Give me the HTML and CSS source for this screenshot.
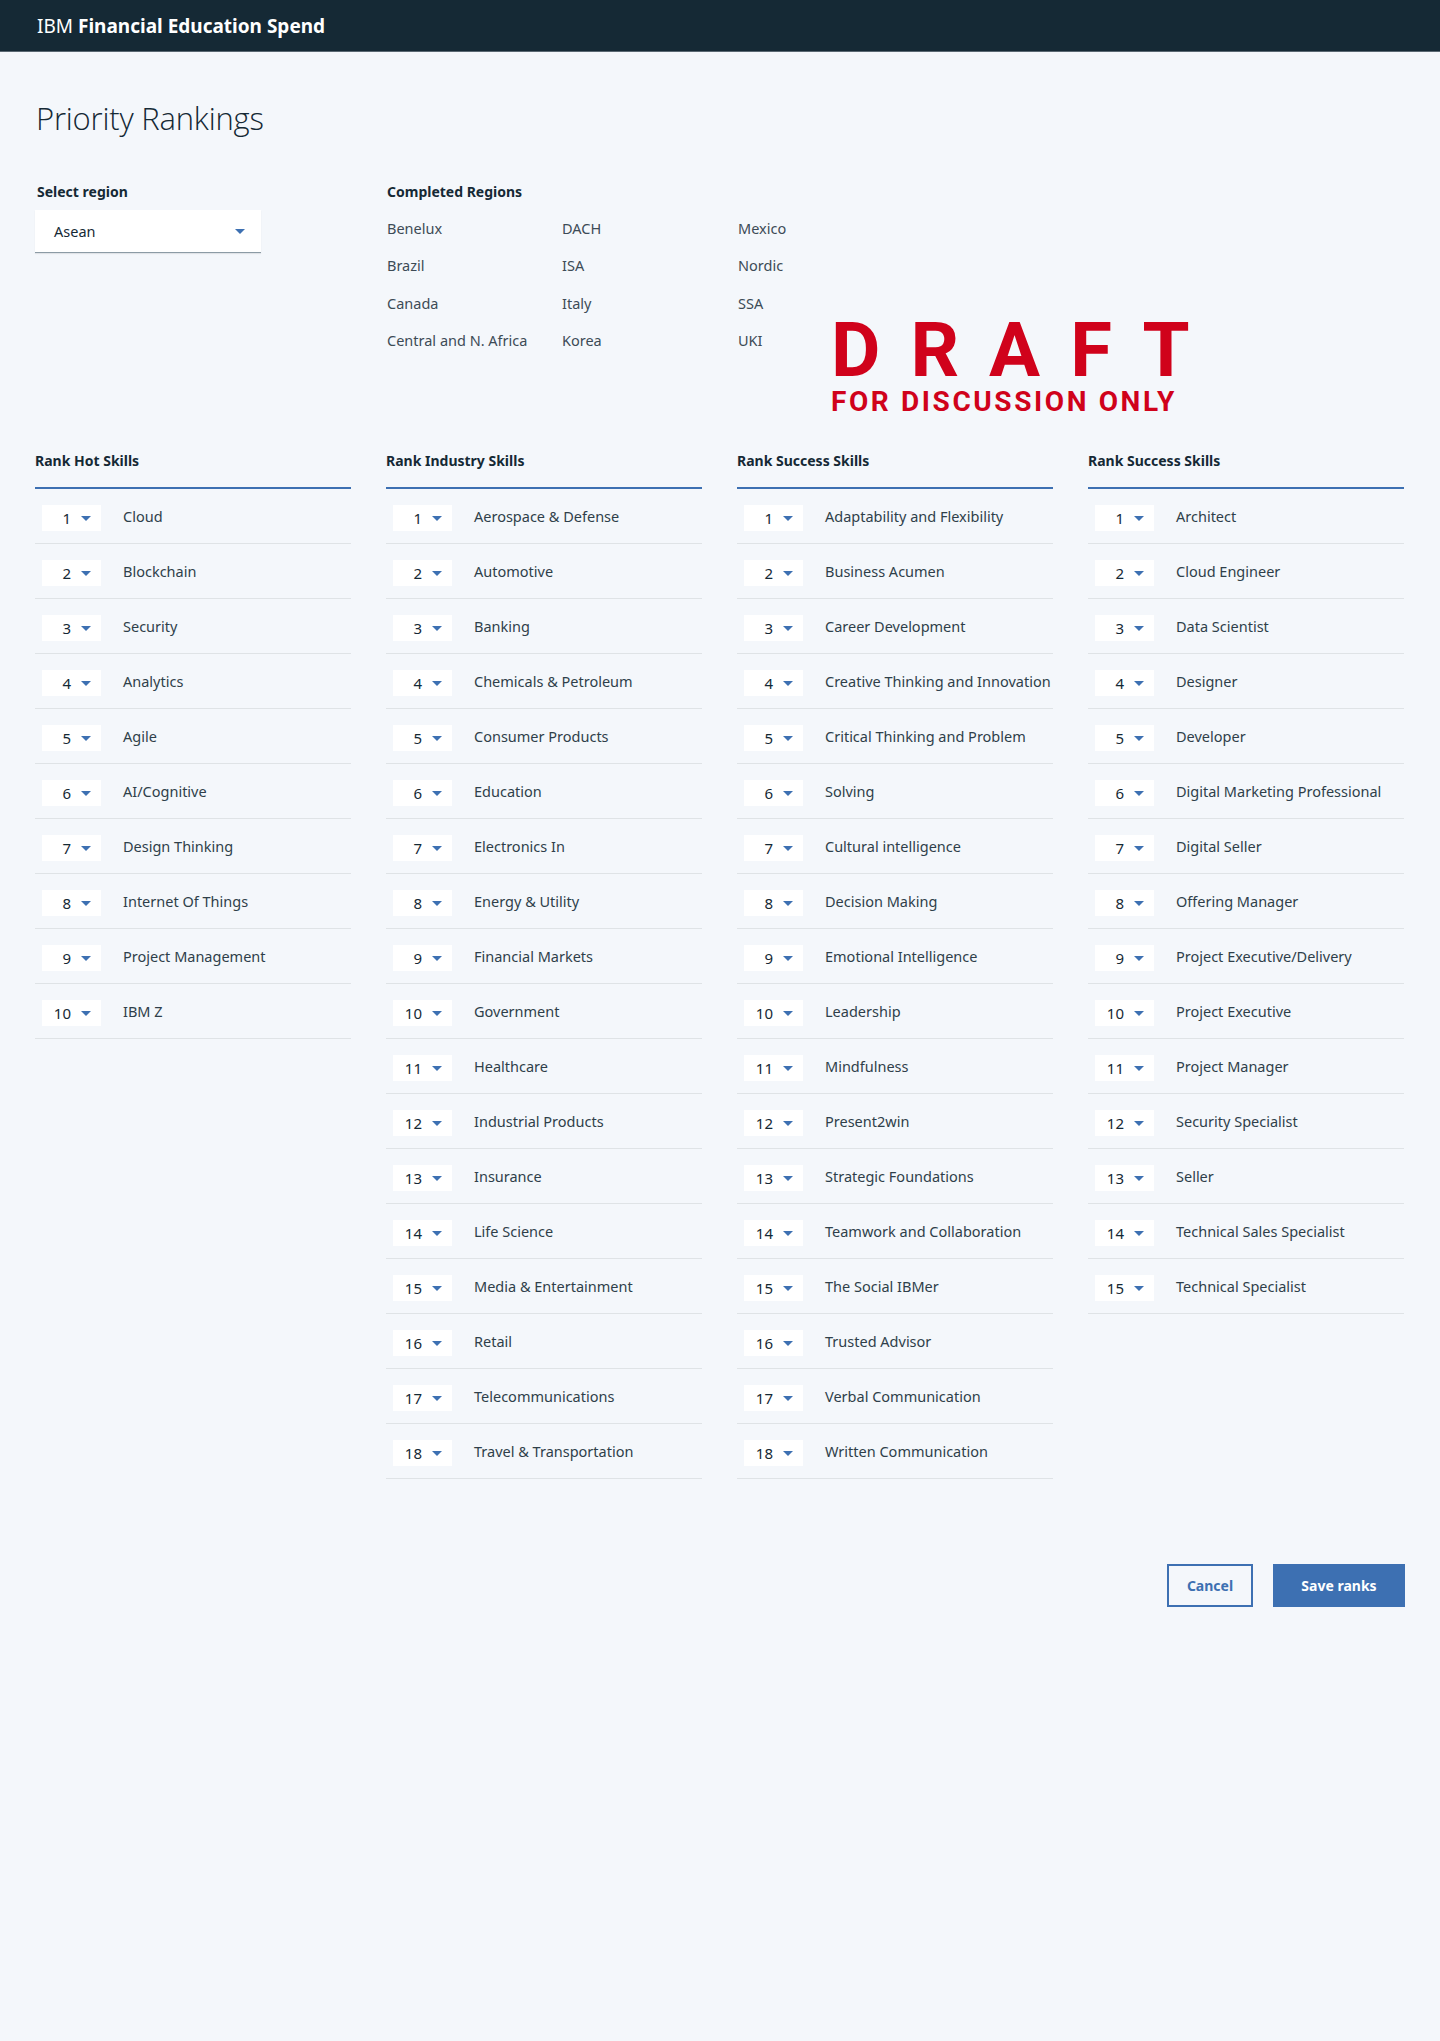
FILE: index.html
```html
<!DOCTYPE html>
<html lang="en">
<head>
<meta charset="utf-8">
<title>IBM Financial Education Spend</title>
<link rel="stylesheet" href="styles.css">
</head>
<body>
<header class="masthead">
  <span class="brand">IBM <strong>Financial Education Spend</strong></span>
</header>
<main class="page">
  <h1 class="page-title">Priority Rankings</h1>

  <section class="overview">
    <div class="region-select">
      <label class="field-label">Select region</label>
      <div class="select-box"><span>Asean</span><i class="caret"></i></div>
    </div>
    <div class="completed">
      <div class="field-label">Completed Regions</div>
      <ul class="region-grid">
        <li>Benelux</li><li>DACH</li><li>Mexico</li>
        <li>Brazil</li><li>ISA</li><li>Nordic</li>
        <li>Canada</li><li>Italy</li><li>SSA</li>
        <li>Central and N. Africa</li><li>Korea</li><li>UKI</li>
      </ul>
    </div>
    <div class="draft-stamp">
      <div class="draft-word">DRAFT</div>
      <div class="draft-sub">FOR DISCUSSION ONLY</div>
    </div>
  </section>

  <section class="rank-grid">
    <div class="rank-col">
      <h2 class="col-title">Rank Hot Skills</h2>
      <ul class="rank-list">
        <li class="row"><span class="rank"><b>1</b><i class="caret"></i></span><span class="skill">Cloud</span></li>
        <li class="row"><span class="rank"><b>2</b><i class="caret"></i></span><span class="skill">Blockchain</span></li>
        <li class="row"><span class="rank"><b>3</b><i class="caret"></i></span><span class="skill">Security</span></li>
        <li class="row"><span class="rank"><b>4</b><i class="caret"></i></span><span class="skill">Analytics</span></li>
        <li class="row"><span class="rank"><b>5</b><i class="caret"></i></span><span class="skill">Agile</span></li>
        <li class="row"><span class="rank"><b>6</b><i class="caret"></i></span><span class="skill">AI/Cognitive</span></li>
        <li class="row"><span class="rank"><b>7</b><i class="caret"></i></span><span class="skill">Design Thinking</span></li>
        <li class="row"><span class="rank"><b>8</b><i class="caret"></i></span><span class="skill">Internet Of Things</span></li>
        <li class="row"><span class="rank"><b>9</b><i class="caret"></i></span><span class="skill">Project Management</span></li>
        <li class="row"><span class="rank"><b>10</b><i class="caret"></i></span><span class="skill">IBM Z</span></li>
      </ul>
    </div>
    <div class="rank-col">
      <h2 class="col-title">Rank Industry Skills</h2>
      <ul class="rank-list">
        <li class="row"><span class="rank"><b>1</b><i class="caret"></i></span><span class="skill">Aerospace &amp; Defense</span></li>
        <li class="row"><span class="rank"><b>2</b><i class="caret"></i></span><span class="skill">Automotive</span></li>
        <li class="row"><span class="rank"><b>3</b><i class="caret"></i></span><span class="skill">Banking</span></li>
        <li class="row"><span class="rank"><b>4</b><i class="caret"></i></span><span class="skill">Chemicals &amp; Petroleum</span></li>
        <li class="row"><span class="rank"><b>5</b><i class="caret"></i></span><span class="skill">Consumer Products</span></li>
        <li class="row"><span class="rank"><b>6</b><i class="caret"></i></span><span class="skill">Education</span></li>
        <li class="row"><span class="rank"><b>7</b><i class="caret"></i></span><span class="skill">Electronics In</span></li>
        <li class="row"><span class="rank"><b>8</b><i class="caret"></i></span><span class="skill">Energy &amp; Utility</span></li>
        <li class="row"><span class="rank"><b>9</b><i class="caret"></i></span><span class="skill">Financial Markets</span></li>
        <li class="row"><span class="rank"><b>10</b><i class="caret"></i></span><span class="skill">Government</span></li>
        <li class="row"><span class="rank"><b>11</b><i class="caret"></i></span><span class="skill">Healthcare</span></li>
        <li class="row"><span class="rank"><b>12</b><i class="caret"></i></span><span class="skill">Industrial Products</span></li>
        <li class="row"><span class="rank"><b>13</b><i class="caret"></i></span><span class="skill">Insurance</span></li>
        <li class="row"><span class="rank"><b>14</b><i class="caret"></i></span><span class="skill">Life Science</span></li>
        <li class="row"><span class="rank"><b>15</b><i class="caret"></i></span><span class="skill">Media &amp; Entertainment</span></li>
        <li class="row"><span class="rank"><b>16</b><i class="caret"></i></span><span class="skill">Retail</span></li>
        <li class="row"><span class="rank"><b>17</b><i class="caret"></i></span><span class="skill">Telecommunications</span></li>
        <li class="row"><span class="rank"><b>18</b><i class="caret"></i></span><span class="skill">Travel &amp; Transportation</span></li>
      </ul>
    </div>
    <div class="rank-col">
      <h2 class="col-title">Rank Success Skills</h2>
      <ul class="rank-list">
        <li class="row"><span class="rank"><b>1</b><i class="caret"></i></span><span class="skill">Adaptability and Flexibility</span></li>
        <li class="row"><span class="rank"><b>2</b><i class="caret"></i></span><span class="skill">Business Acumen</span></li>
        <li class="row"><span class="rank"><b>3</b><i class="caret"></i></span><span class="skill">Career Development</span></li>
        <li class="row"><span class="rank"><b>4</b><i class="caret"></i></span><span class="skill">Creative Thinking and Innovation</span></li>
        <li class="row"><span class="rank"><b>5</b><i class="caret"></i></span><span class="skill">Critical Thinking and Problem</span></li>
        <li class="row"><span class="rank"><b>6</b><i class="caret"></i></span><span class="skill">Solving</span></li>
        <li class="row"><span class="rank"><b>7</b><i class="caret"></i></span><span class="skill">Cultural intelligence</span></li>
        <li class="row"><span class="rank"><b>8</b><i class="caret"></i></span><span class="skill">Decision Making</span></li>
        <li class="row"><span class="rank"><b>9</b><i class="caret"></i></span><span class="skill">Emotional Intelligence</span></li>
        <li class="row"><span class="rank"><b>10</b><i class="caret"></i></span><span class="skill">Leadership</span></li>
        <li class="row"><span class="rank"><b>11</b><i class="caret"></i></span><span class="skill">Mindfulness</span></li>
        <li class="row"><span class="rank"><b>12</b><i class="caret"></i></span><span class="skill">Present2win</span></li>
        <li class="row"><span class="rank"><b>13</b><i class="caret"></i></span><span class="skill">Strategic Foundations</span></li>
        <li class="row"><span class="rank"><b>14</b><i class="caret"></i></span><span class="skill">Teamwork and Collaboration</span></li>
        <li class="row"><span class="rank"><b>15</b><i class="caret"></i></span><span class="skill">The Social IBMer</span></li>
        <li class="row"><span class="rank"><b>16</b><i class="caret"></i></span><span class="skill">Trusted Advisor</span></li>
        <li class="row"><span class="rank"><b>17</b><i class="caret"></i></span><span class="skill">Verbal Communication</span></li>
        <li class="row"><span class="rank"><b>18</b><i class="caret"></i></span><span class="skill">Written Communication</span></li>
      </ul>
    </div>
    <div class="rank-col">
      <h2 class="col-title">Rank Success Skills</h2>
      <ul class="rank-list">
        <li class="row"><span class="rank"><b>1</b><i class="caret"></i></span><span class="skill">Architect</span></li>
        <li class="row"><span class="rank"><b>2</b><i class="caret"></i></span><span class="skill">Cloud Engineer</span></li>
        <li class="row"><span class="rank"><b>3</b><i class="caret"></i></span><span class="skill">Data Scientist</span></li>
        <li class="row"><span class="rank"><b>4</b><i class="caret"></i></span><span class="skill">Designer</span></li>
        <li class="row"><span class="rank"><b>5</b><i class="caret"></i></span><span class="skill">Developer</span></li>
        <li class="row"><span class="rank"><b>6</b><i class="caret"></i></span><span class="skill">Digital Marketing Professional</span></li>
        <li class="row"><span class="rank"><b>7</b><i class="caret"></i></span><span class="skill">Digital Seller</span></li>
        <li class="row"><span class="rank"><b>8</b><i class="caret"></i></span><span class="skill">Offering Manager</span></li>
        <li class="row"><span class="rank"><b>9</b><i class="caret"></i></span><span class="skill">Project Executive/Delivery</span></li>
        <li class="row"><span class="rank"><b>10</b><i class="caret"></i></span><span class="skill">Project Executive</span></li>
        <li class="row"><span class="rank"><b>11</b><i class="caret"></i></span><span class="skill">Project Manager</span></li>
        <li class="row"><span class="rank"><b>12</b><i class="caret"></i></span><span class="skill">Security Specialist</span></li>
        <li class="row"><span class="rank"><b>13</b><i class="caret"></i></span><span class="skill">Seller</span></li>
        <li class="row"><span class="rank"><b>14</b><i class="caret"></i></span><span class="skill">Technical Sales Specialist</span></li>
        <li class="row"><span class="rank"><b>15</b><i class="caret"></i></span><span class="skill">Technical Specialist</span></li>
      </ul>
    </div>
  </section>

  <div class="actions">
    <button class="btn btn-secondary" type="button">Cancel</button>
    <button class="btn btn-primary" type="button">Save ranks</button>
  </div>
</main>
</body>
</html>
```

FILE: styles.css
```css
html {
  background: #f4f7fb;
}
body {
  margin: 0;
  min-height: 2041px;
  background: #f4f7fb;
  color: #152935;
  font-family: "Noto Sans", "Open Sans", "Liberation Sans", sans-serif;
  font-size: 14px;
}
ul {
  list-style: none;
  margin: 0;
  padding: 0;
}

/* header */
.masthead {
  height: 51px;
  background: #152935;
  border-bottom: 1px solid #5a6872;
  display: flex;
  align-items: center;
  padding-left: 37px;
  box-sizing: content-box;
}
.brand {
  color: #ffffff;
  font-size: 19px;
  line-height: 22px;
  font-weight: 400;
}
.brand strong {
  font-weight: 700;
}

/* page */
.page {
  padding: 0 35px;
}
.page-title {
  margin: 48px 0 0 1px;
  font-family: "Open Sans", "Noto Sans", sans-serif;
  font-weight: 300;
  font-size: 31px;
  line-height: 37px;
  color: #152935;
  letter-spacing: -0.2px;
}

/* overview */
.overview {
  position: relative;
  display: flex;
  margin-top: 46px;
  height: 180px;
}
.region-select {
  width: 352px;
  flex: none;
}
.field-label {
  display: block;
  font-size: 14px;
  line-height: 18px;
  font-weight: 700;
  color: #152935;
}
.region-select .field-label {
  padding-left: 2px;
}
.select-box {
  margin-top: 9px;
  width: 226px;
  height: 43px;
  background: #ffffff;
  border-bottom: 1px solid #8c9ba5;
  box-shadow: 0 1px 1px rgba(0, 0, 0, 0.08);
  display: flex;
  align-items: center;
  justify-content: space-between;
  padding: 0 16px 0 19px;
  box-sizing: border-box;
  font-size: 14.5px;
  color: #152935;
}
.caret {
  display: inline-block;
  width: 0;
  height: 0;
  border-left: 5px solid transparent;
  border-right: 5px solid transparent;
  border-top: 5px solid #3d70b2;
}
.completed {
  flex: none;
}
.region-grid {
  margin-top: 8px;
  display: grid;
  grid-template-columns: 175px 176px 175px;
  grid-auto-rows: 37.5px;
  align-items: center;
  font-size: 14.5px;
  color: #3d4b56;
}

/* draft stamp overlay */
.draft-stamp {
  position: absolute;
  left: 796px;
  top: 129px;
  color: #d0021b;
  font-family: "Roboto", "Liberation Sans", sans-serif;
  font-weight: 700;
  text-align: left;
}
.draft-word {
  font-size: 76px;
  line-height: 76px;
  letter-spacing: 30px;
}
.draft-sub {
  font-size: 28px;
  line-height: 28px;
  letter-spacing: 2.6px;
}

/* rank columns */
.rank-grid {
  display: grid;
  grid-template-columns: repeat(4, 316px);
  column-gap: 35px;
  align-items: start;
  margin-top: 89px;
}
.col-title {
  margin: 0;
  font-size: 14px;
  line-height: 18px;
  font-weight: 700;
  color: #152935;
  padding-bottom: 17px;
  border-bottom: 2px solid #3d70b2;
}
.row {
  display: flex;
  align-items: flex-start;
  height: 55px;
  padding-top: 16px;
  box-sizing: border-box;
  border-bottom: 1px solid #dfe3e6;
  padding-left: 7px;
}
.rank {
  display: flex;
  align-items: center;
  width: 59px;
  height: 26px;
  background: #ffffff;
  flex: none;
}
.rank b {
  width: 29px;
  text-align: right;
  font-weight: 400;
  font-size: 15px;
  color: #152935;
}
.rank .caret {
  margin-left: 10px;
}
.skill {
  margin-left: 22px;
  margin-top: 2px;
  line-height: 18px;
  font-size: 14.5px;
  color: #2f3f4a;
  white-space: nowrap;
}

/* actions */
.actions {
  display: flex;
  justify-content: flex-end;
  gap: 20px;
  margin-top: 85px;
}
.btn {
  height: 43px;
  font-family: inherit;
  font-size: 14px;
  font-weight: 700;
  border: 2px solid #3d70b2;
  cursor: pointer;
  padding: 0;
}
.btn-secondary {
  width: 86px;
  background: transparent;
  color: #3d70b2;
}
.btn-primary {
  width: 132px;
  background: #3d70b2;
  color: #ffffff;
}
```
